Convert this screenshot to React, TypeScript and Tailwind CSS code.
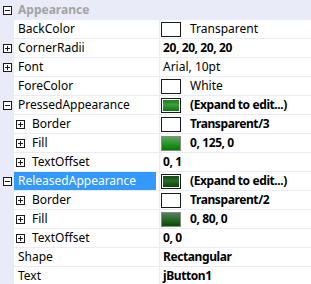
import React from "react";

type Row = {
  name: string;
  value: string;
  bold?: boolean;
  level: 0 | 1;
  toggle?: "plus" | "minus";
  swatch?: "white" | "pressed" | "released" | "fill125" | "fill80";
  selected?: boolean;
};

const rows: Row[] = [
  { name: "BackColor", value: "Transparent", level: 0, swatch: "white" },
  { name: "CornerRadii", value: "20, 20, 20, 20", bold: true, level: 0, toggle: "plus" },
  { name: "Font", value: "Arial, 10pt", level: 0, toggle: "plus" },
  { name: "ForeColor", value: "White", level: 0, swatch: "white" },
  { name: "PressedAppearance", value: "(Expand to edit...)", bold: true, level: 0, toggle: "minus", swatch: "pressed" },
  { name: "Border", value: "Transparent/3", bold: true, level: 1, toggle: "plus", swatch: "white" },
  { name: "Fill", value: "0, 125, 0", bold: true, level: 1, toggle: "plus", swatch: "fill125" },
  { name: "TextOffset", value: "0, 1", bold: true, level: 1, toggle: "plus" },
  { name: "ReleasedAppearance", value: "(Expand to edit...)", bold: true, level: 0, toggle: "minus", swatch: "released", selected: true },
  { name: "Border", value: "Transparent/2", bold: true, level: 1, toggle: "plus", swatch: "white" },
  { name: "Fill", value: "0, 80, 0", bold: true, level: 1, toggle: "plus", swatch: "fill80" },
  { name: "TextOffset", value: "0, 0", bold: true, level: 1, toggle: "plus" },
  { name: "Shape", value: "Rectangular", bold: true, level: 0 },
  { name: "Text", value: "jButton1", bold: true, level: 0 },
];

function Toggle({ kind }: { kind: "plus" | "minus" }) {
  return (
    <svg width="9" height="9" viewBox="0 0 9 9" className="shrink-0">
      <rect x="0.5" y="0.5" width="8" height="8" fill="white" stroke="#1a1a1a" />
      <line x1="2" y1="4.5" x2="7" y2="4.5" stroke="#1a1a1a" />
      {kind === "plus" && <line x1="4.5" y1="2" x2="4.5" y2="7" stroke="#1a1a1a" />}
    </svg>
  );
}

function Swatch({ kind }: { kind: NonNullable<Row["swatch"]> }) {
  if (kind === "white")
    return <div className="w-[20px] h-[15px] border border-[#1a1a1a] bg-white shrink-0" />;
  if (kind === "pressed" || kind === "released")
    return (
      <div className="w-[20px] h-[15px] border border-[#1a1a1a] bg-white p-px shrink-0">
        <div
          className={
            kind === "pressed"
              ? "w-full h-full bg-[linear-gradient(to_bottom,#1f7f1f,#3e9d3e_45%,#0b740b)]"
              : "w-full h-full bg-[linear-gradient(to_bottom,#124f12,#2f6a2f_45%,#024a02)]"
          }
        />
      </div>
    );
  return (
    <div className="w-[20px] h-[15px] border border-[#8a8a8a] shrink-0">
      <div
        className={
          kind === "fill125"
            ? "w-full h-full bg-[linear-gradient(to_bottom,#5aa95a,#007d00)]"
            : "w-full h-full bg-[linear-gradient(to_bottom,#557f55,#005000)]"
        }
      />
    </div>
  );
}

export default function App() {
  return (
    <div
      className="w-[311px] h-[284px] bg-[#e9ecf8] overflow-hidden text-[12px] leading-none text-black"
      style={{ fontFamily: '"Noto Sans", "Open Sans", sans-serif' }}
    >
      <div className="h-[20px] flex items-center">
        <div className="w-[14px] flex items-center pl-[3px]">
          <Toggle kind="minus" />
        </div>
        <div className="pl-[4px] font-bold text-[#a3a3a3]">Appearance</div>
      </div>
      <div className="flex flex-col gap-px">
        {rows.map((r, i) => (
          <div key={i} className="h-[18px] flex">
            <div className="w-[14px] flex items-center pl-[3px] shrink-0">
              {r.level === 0 && r.toggle && <Toggle kind={r.toggle} />}
            </div>
            <div className="w-[145px] bg-white flex items-center shrink-0">
              {r.level === 1 ? (
                <div className="flex items-center pl-[2px]">
                  <Toggle kind={r.toggle ?? "plus"} />
                  <span className="pl-[7px]">{r.name}</span>
                </div>
              ) : (
                <div
                  className={
                    r.selected
                      ? "w-[142px] h-full flex items-center pl-[4px] bg-[#3399ff] text-white"
                      : "h-full flex items-center pl-[4px]"
                  }
                >
                  {r.name}
                </div>
              )}
            </div>
            <div className="ml-px flex-1 bg-white flex items-center pl-[1px]">
              {r.swatch ? (
                <>
                  <Swatch kind={r.swatch} />
                  <span className={"pl-[9px] " + (r.bold ? "font-bold tracking-[-0.4px]" : "")}>{r.value}</span>
                </>
              ) : (
                <span className={"pl-[2px] " + (r.bold ? "font-bold tracking-[-0.4px]" : "")}>{r.value}</span>
              )}
            </div>
          </div>
        ))}
      </div>
    </div>
  );
}
